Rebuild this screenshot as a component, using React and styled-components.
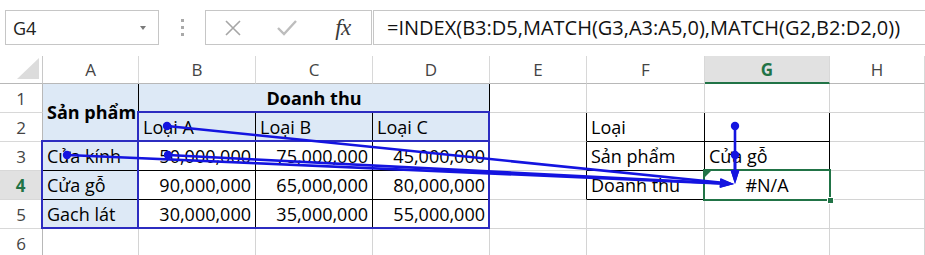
import React from 'react';
import styled, { createGlobalStyle } from 'styled-components';

const Global = createGlobalStyle`
  html, body { margin: 0; padding: 0; background: #fff; }
  body { font-family: "Open Sans", "Noto Sans", sans-serif; color: #000; }
  * { box-sizing: border-box; }
`;

const GRID = '#d4d4d4';
const BLACK = '#000';
const FILL = '#dde9f6';
const GREEN = '#217346';
const ARROW = '#1414e0';
const BOX = '#2c2cc0';

const Page = styled.div`
  position: relative;
  width: 925px;
  height: 255px;
  overflow: hidden;
  background: #fff;
`;

const FormulaBar = styled.div`
  display: flex;
  align-items: flex-start;
  height: 56px;
  padding: 10px 0 0 5px;
`;

const NameBox = styled.div`
  width: 154px;
  height: 35px;
  border: 1px solid #c6c6c6;
  display: flex;
  align-items: center;
  justify-content: space-between;
  padding: 0 12px 0 7px;
  font-size: 18px;
  color: #222;
`;

const DropArrow = styled.span`
  width: 0;
  height: 0;
  border-left: 3.5px solid transparent;
  border-right: 3.5px solid transparent;
  border-top: 4px solid #7a7a7a;
`;

const Grip = styled.div`
  width: 46px;
  height: 35px;
  display: flex;
  flex-direction: column;
  align-items: center;
  justify-content: center;
  gap: 4px;
  padding-left: 1px;
`;

const GripDot = styled.span`
  width: 3px;
  height: 3px;
  background: #a9a9a9;
`;

const ButtonBox = styled.div`
  width: 167px;
  height: 35px;
  border: 1px solid #c6c6c6;
  display: flex;
  align-items: center;
  padding-left: 9px;
`;

const IconSlot = styled.div`
  width: ${p => p.$w}px;
  display: flex;
  align-items: center;
  justify-content: center;
`;

const Fx = styled.span`
  font-family: "Liberation Serif", "DejaVu Serif", serif;
  font-style: italic;
  font-size: 23px;
  color: #3a3a3a;
  letter-spacing: -0.5px;
`;

const FormulaBox = styled.div`
  flex: 1;
  height: 35px;
  margin-left: 1px;
  border: 1px solid #c6c6c6;
  border-right: none;
  display: flex;
  align-items: center;
  padding-left: 13px;
  font-size: 20px;
  color: #111;
  white-space: nowrap;
`;

const Sheet = styled.div`
  display: grid;
  grid-template-columns: 43px 96px 117px 117px 117px 97px 118px 125px 1fr;
  grid-template-rows: 28px repeat(6, 29px);
`;

const Corner = styled.div`
  border-right: 1px solid #c8c8c8;
  border-bottom: 1px solid #b8b8b8;
  display: flex;
  align-items: flex-end;
  justify-content: flex-end;
  padding: 0 3px 4px 0;
`;

const ColHead = styled.div`
  background: ${p => (p.$active ? '#e1e1e1' : '#fff')};
  border-right: 1px solid #d8d8d8;
  border-bottom: ${p => (p.$active ? `2px solid ${GREEN}` : '1px solid #b8b8b8')};
  display: flex;
  align-items: center;
  justify-content: center;
  padding-top: ${p => (p.$active ? 1 : 0)}px;
  font-size: 17px;
  font-weight: ${p => (p.$active ? 700 : 400)};
  color: ${p => (p.$active ? GREEN : '#444')};
`;

const RowHead = styled.div`
  background: ${p => (p.$active ? '#e1e1e1' : '#fff')};
  border-right: ${p => (p.$active ? `2px solid ${GREEN}` : '1px solid #b8b8b8')};
  border-bottom: 1px solid #d8d8d8;
  display: flex;
  align-items: center;
  justify-content: center;
  font-size: 17px;
  font-weight: ${p => (p.$active ? 700 : 400)};
  color: ${p => (p.$active ? GREEN : '#444')};
`;

const Cell = styled.div`
  grid-column: span ${p => p.$cols || 1};
  grid-row: span ${p => p.$rows || 1};
  background: ${p => p.$fill || '#fff'};
  border-right: 1px solid ${p => p.$rb || GRID};
  border-bottom: 1px solid ${p => p.$bb || GRID};
  display: flex;
  align-items: ${p => (p.$mid ? 'center' : 'flex-end')};
  justify-content: ${p =>
    p.$align === 'right' ? 'flex-end' : p.$align === 'center' ? 'center' : 'flex-start'};
  padding: 0 4px 1px 4px;
  font-size: 18px;
  line-height: 25px;
  font-weight: ${p => (p.$bold ? 700 : 400)};
  white-space: nowrap;
  overflow: visible;
`;

const Overlay = styled.svg`
  position: absolute;
  left: 0;
  top: 0;
  pointer-events: none;
`;

const Selection = styled.div`
  position: absolute;
  left: 703px;
  top: 169px;
  width: 128px;
  height: 32px;
  border: 2px solid ${GREEN};
  pointer-events: none;
`;

const FillHandle = styled.span`
  position: absolute;
  right: -5px;
  bottom: -5px;
  width: 7px;
  height: 7px;
  background: ${GREEN};
  border: 1px solid #fff;
`;

const ErrorFlag = styled.span`
  position: absolute;
  left: 0;
  top: 0;
  width: 0;
  height: 0;
  border-top: 6px solid ${GREEN};
  border-right: 6px solid transparent;
`;

const cols = ['A', 'B', 'C', 'D', 'E', 'F', 'G', 'H'];

function Arrow({ x1, y1, x2, y2 }) {
  const ang = Math.atan2(y2 - y1, x2 - x1);
  const len = 14;
  const half = 4.5;
  const bx = x2 - len * Math.cos(ang);
  const by = y2 - len * Math.sin(ang);
  const px = -Math.sin(ang) * half;
  const py = Math.cos(ang) * half;
  return (
    <g>
      <line x1={x1} y1={y1} x2={bx} y2={by} stroke={ARROW} strokeWidth="2.6" />
      <polygon
        points={`${x2},${y2} ${bx + px},${by + py} ${bx - px},${by - py}`}
        fill={ARROW}
      />
      <circle cx={x1} cy={y1} r="4.2" fill={ARROW} />
    </g>
  );
}

export default function App() {
  return (
    <Page>
      <Global />
      <FormulaBar>
        <NameBox>
          <span>G4</span>
          <DropArrow />
        </NameBox>
        <Grip>
          <GripDot />
          <GripDot />
          <GripDot />
        </Grip>
        <ButtonBox>
          <IconSlot $w={36}>
            <svg width="20" height="20" viewBox="0 0 20 20">
              <path d="M3 3 L17 17 M17 3 L3 17" stroke="#a6a6a6" strokeWidth="1.6" fill="none" />
            </svg>
          </IconSlot>
          <IconSlot $w={72}>
            <svg width="22" height="18" viewBox="0 0 22 18">
              <path d="M2 9 L8 15 L20 2" stroke="#bdbdbd" strokeWidth="2.4" fill="none" />
            </svg>
          </IconSlot>
          <IconSlot $w={40}>
            <Fx>fx</Fx>
          </IconSlot>
        </ButtonBox>
        <FormulaBox>=INDEX(B3:D5,MATCH(G3,A3:A5,0),MATCH(G2,B2:D2,0))</FormulaBox>
      </FormulaBar>

      <Sheet>
        <Corner>
          <svg width="22" height="21" viewBox="0 0 22 21">
            <polygon points="22,0 22,21 0,21" fill="#dcdcdc" />
          </svg>
        </Corner>
        {cols.map(c => (
          <ColHead key={c} $active={c === 'G'}>{c}</ColHead>
        ))}

        {/* Row 1 */}
        <RowHead>1</RowHead>
        <Cell $rows={2} $fill={FILL} $bold $mid $rb={BLACK} $bb={BLACK}>Sản phẩm</Cell>
        <Cell $cols={3} $fill={FILL} $bold $align="center" $rb={BLACK} $bb={BLACK}>Doanh thu</Cell>
        <Cell />
        <Cell />
        <Cell />
        <Cell />

        {/* Row 2 */}
        <RowHead>2</RowHead>
        <Cell $fill={FILL} $rb={BLACK} $bb={BLACK}>Loại A</Cell>
        <Cell $fill={FILL} $rb={BLACK} $bb={BLACK}>Loại B</Cell>
        <Cell $fill={FILL} $rb={BLACK} $bb={BLACK}>Loại C</Cell>
        <Cell $rb={BLACK} />
        <Cell $rb={BLACK} $bb={BLACK}>Loại</Cell>
        <Cell $rb={BLACK} $bb={BLACK} />
        <Cell />

        {/* Row 3 */}
        <RowHead>3</RowHead>
        <Cell $fill={FILL} $rb={BLACK} $bb={BLACK}>Cửa kính</Cell>
        <Cell $align="right" $rb={BLACK} $bb={BLACK}>50,000,000</Cell>
        <Cell $align="right" $rb={BLACK} $bb={BLACK}>75,000,000</Cell>
        <Cell $align="right" $rb={BLACK} $bb={BLACK}>45,000,000</Cell>
        <Cell $rb={BLACK} />
        <Cell $rb={BLACK} $bb={BLACK}>Sản phẩm</Cell>
        <Cell $rb={BLACK} $bb={BLACK}>Cửa gỗ</Cell>
        <Cell />

        {/* Row 4 */}
        <RowHead $active>4</RowHead>
        <Cell $fill={FILL} $rb={BLACK} $bb={BLACK}>Cửa gỗ</Cell>
        <Cell $align="right" $rb={BLACK} $bb={BLACK}>90,000,000</Cell>
        <Cell $align="right" $rb={BLACK} $bb={BLACK}>65,000,000</Cell>
        <Cell $align="right" $rb={BLACK} $bb={BLACK}>80,000,000</Cell>
        <Cell $rb={BLACK} />
        <Cell $rb={BLACK} $bb={BLACK}>Doanh thu</Cell>
        <Cell $align="center" $rb={BLACK} $bb={BLACK}>#N/A</Cell>
        <Cell />

        {/* Row 5 */}
        <RowHead>5</RowHead>
        <Cell $fill={FILL} $rb={BLACK} $bb={BLACK}>Gach lát</Cell>
        <Cell $align="right" $rb={BLACK} $bb={BLACK}>30,000,000</Cell>
        <Cell $align="right" $rb={BLACK} $bb={BLACK}>35,000,000</Cell>
        <Cell $align="right" $rb={BLACK} $bb={BLACK}>55,000,000</Cell>
        <Cell />
        <Cell />
        <Cell />
        <Cell />

        {/* Row 6 */}
        <RowHead>6</RowHead>
        <Cell />
        <Cell />
        <Cell />
        <Cell />
        <Cell />
        <Cell />
        <Cell />
        <Cell />
      </Sheet>

      <Selection>
        <ErrorFlag />
        <FillHandle />
      </Selection>

      <Overlay width="925" height="255" viewBox="0 0 925 255">
        <rect x="42" y="141" width="96" height="87" fill="none" stroke={BOX} strokeWidth="2" />
        <rect x="138" y="141" width="351" height="87" fill="none" stroke={BOX} strokeWidth="2" />
        <rect x="138" y="112" width="351" height="29" fill="none" stroke={BOX} strokeWidth="2" />
        <Arrow x1={167} y1={126} x2={734} y2={184} />
        <Arrow x1={67} y1={155} x2={734} y2={184} />
        <Arrow x1={168} y1={155} x2={734} y2={184} />
        <Arrow x1={735} y1={126} x2={735} y2={184} />
        <Arrow x1={735} y1={155} x2={735} y2={184} />
      </Overlay>
    </Page>
  );
}
